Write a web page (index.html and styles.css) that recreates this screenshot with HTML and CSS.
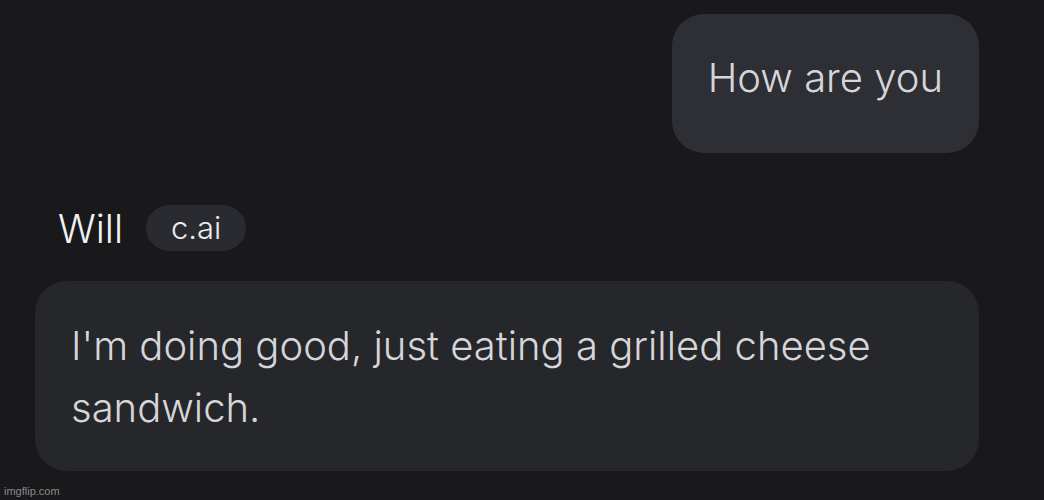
FILE: index.html
```html
<!DOCTYPE html>
<html>
<head>
<meta charset="utf-8">
<link rel="stylesheet" href="styles.css">
</head>
<body>
<div class="chat">
  <div class="row-user">
    <div class="bubble-user">How are you</div>
  </div>
  <div class="bot">
    <div class="bot-head">
      <span class="bot-name">Will</span>
      <span class="tag">c.ai</span>
    </div>
    <div class="bubble-bot">I'm doing good, just eating a grilled cheese sandwich.</div>
  </div>
</div>
<div class="watermark">imgflip.com</div>
</body>
</html>
```
FILE: styles.css
```css
html, body {
  margin: 0;
  padding: 0;
  background: #19191b;
  width: 1044px;
  height: 500px;
  overflow: hidden;
  font-family: Inter, "Noto Sans", sans-serif;
}
.chat {
  display: flex;
  flex-direction: column;
  padding: 14px 65px 0 35px;
}
.row-user {
  display: flex;
  justify-content: flex-end;
}
.bubble-user {
  background: #2e2f35;
  color: #d6d6da;
  font-size: 40px;
  font-weight: 300;
  line-height: 62px;
  padding: 33px 36px 44px 36px;
  border-radius: 32px;
}
.bot {
  display: flex;
  flex-direction: column;
  margin-top: 52px;
}
.bot-head {
  display: flex;
  align-items: center;
  gap: 23px;
  padding-left: 23px;
  height: 46px;
}
.bot-name {
  color: #f2f2f4;
  font-size: 39px;
  font-weight: 300;
}
.tag {
  background: #2a2b30;
  color: #ececee;
  font-size: 31px;
  font-weight: 300;
  height: 46px;
  line-height: 46px;
  padding: 0 25px;
  border-radius: 23px;
}
.bubble-bot {
  margin-top: 30px;
  background: #26272b;
  color: #d6d6da;
  font-size: 40px;
  font-weight: 300;
  line-height: 62px;
  padding: 34px 100px 32px 36px;
  border-radius: 32px;
}
.watermark {
  position: absolute;
  left: 4px;
  bottom: 3px;
  color: #8a8a8c;
  font-size: 11px;
  font-family: "Liberation Sans", Arial, sans-serif;
}
```
